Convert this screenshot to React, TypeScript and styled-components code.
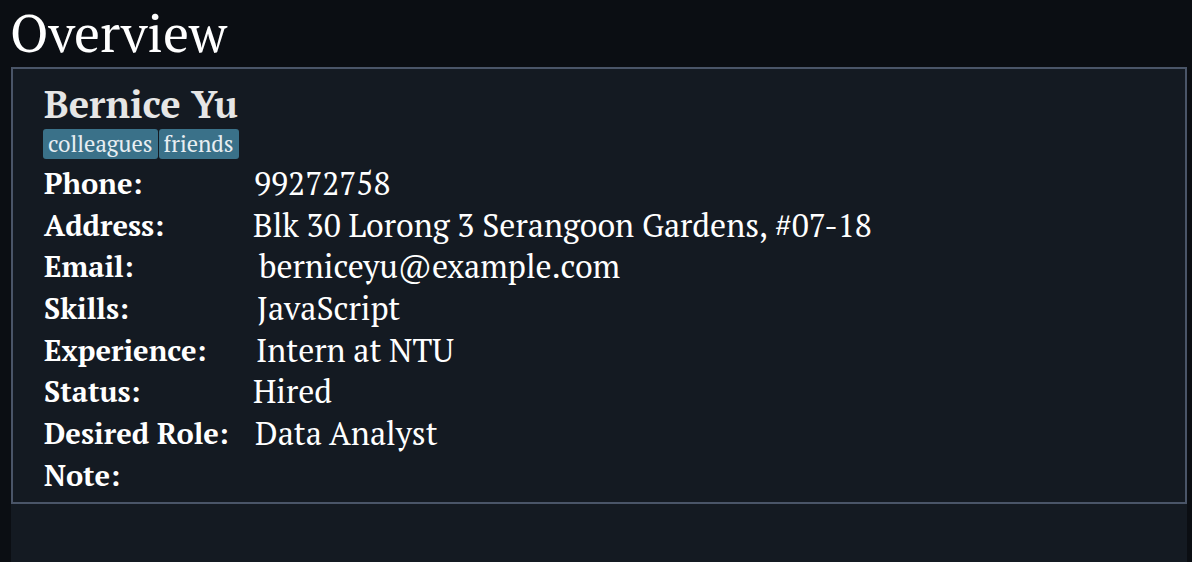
import React from "react";
import styled, { createGlobalStyle } from "styled-components";

const Global = createGlobalStyle`
  html, body { margin: 0; padding: 0; background: #0b0e13; }
  body { font-family: "PT Serif", "Noto Serif", "DejaVu Serif", serif; }
`;

const Page = styled.div`
  width: 1192px;
  height: 562px;
  background: #0b0e13;
  display: flex;
  flex-direction: column;
  overflow: hidden;
`;

const Title = styled.h1`
  margin: 0;
  padding: 0 0 0 10px;
  height: 67px;
  font-size: 52px;
  font-weight: 400;
  line-height: 66px;
  color: #ffffff;
`;

const Content = styled.div`
  flex: 1;
  margin: 0 5px 0 11px;
  background: #141a22;
`;

const Card = styled.section`
  border: 2px solid #4a5568;
  padding: 15px 0 10px 31px;
  height: 437px;
  box-sizing: border-box;
  color: #ffffff;
`;

const Name = styled.h2`
  margin: 0;
  font-size: 38px;
  font-weight: 700;
  color: #e6e6e6;
  line-height: 40px;
`;

const Tags = styled.div`
  display: flex;
  gap: 1px;
  margin-top: 5px;
  margin-left: -1px;
`;

const Tag = styled.span`
  background: #3a7189;
  color: #e8eef2;
  font-size: 22.5px;
  line-height: 30px;
  padding: 0 5px;
  border-radius: 3px;
`;

const Rows = styled.div`
  display: grid;
  grid-template-columns: 209px 1fr;
  grid-auto-rows: 41.7px;
  align-items: center;
  margin-top: 3px;
`;

const Label = styled.div`
  font-size: 29px;
  font-weight: 700;
  white-space: nowrap;
`;

const Value = styled.div<{ $shift: number }>`
  font-size: 32px;
  white-space: nowrap;
  padding-left: ${(p) => p.$shift}px;
`;

const rows: [string, string, number][] = [
  ["Phone:", "99272758", 1],
  ["Address:", "Blk 30 Lorong 3 Serangoon Gardens, #07-18", 0],
  ["Email:", "berniceyu@example.com", 6],
  ["Skills:", "JavaScript", 4],
  ["Experience:", "Intern at NTU", 3],
  ["Status:", "Hired", 0],
  ["Desired Role:", "Data Analyst", 2],
  ["Note:", "", 0],
];

export default function App() {
  return (
    <Page>
      <Global />
      <Title>Overview</Title>
      <Content>
        <Card>
          <Name>Bernice Yu</Name>
          <Tags>
            <Tag>colleagues</Tag>
            <Tag>friends</Tag>
          </Tags>
          <Rows>
            {rows.map(([l, v, s]) => (
              <React.Fragment key={l}>
                <Label>{l}</Label>
                <Value $shift={s}>{v}</Value>
              </React.Fragment>
            ))}
          </Rows>
        </Card>
      </Content>
    </Page>
  );
}
